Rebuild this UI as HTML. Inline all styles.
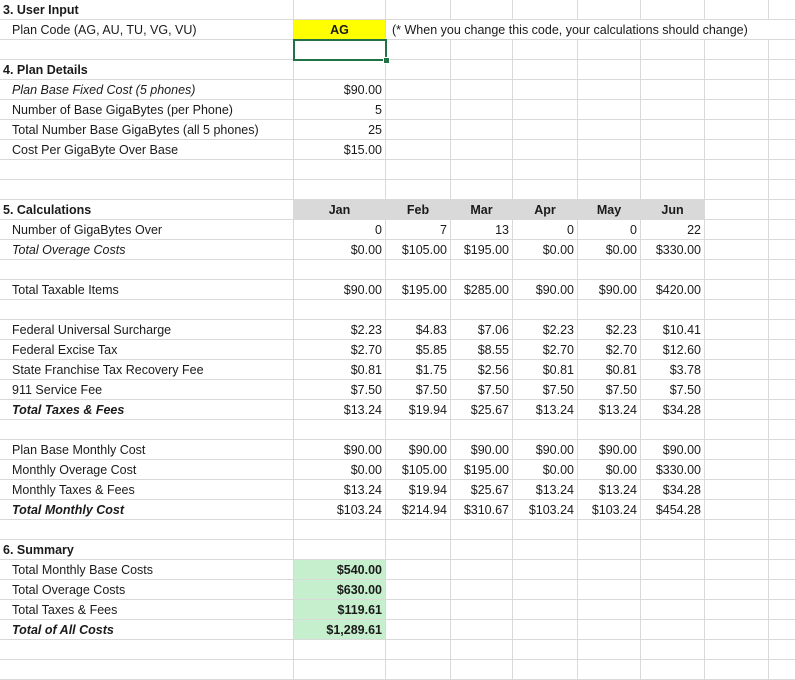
<!DOCTYPE html>
<html><head><meta charset="utf-8"><style>
body{margin:0;background:#fff;width:795px;height:662px;overflow:hidden;font-family:"Liberation Sans",sans-serif;color:#1a1a1a}
table{border-collapse:separate;border-spacing:0;table-layout:fixed;width:834px}
td{box-sizing:border-box;height:20px;border-right:1px solid #d9d9d9;border-bottom:1px solid #d9d9d9;padding:2px 3px 0 3px;font-size:12.5px;white-space:nowrap;overflow:hidden;text-align:right;line-height:17px}
td.l{text-align:left;font-size:12.5px;padding-left:12px}
td.h{text-align:left;font-weight:bold;font-size:12.5px;padding-left:3px}
.i{font-style:italic}.bi{font-style:italic;font-weight:bold}
.c{text-align:center;font-weight:bold}
.g{background:#d9d9d9}
.gr{background:#c6efce;font-weight:bold}
.y{background:#ffff00}
td.ov{text-align:left;overflow:visible;padding-left:6px;font-size:12.5px}
#sel{position:absolute;left:293px;top:39px;width:90px;height:18px;border:2px solid #217346}
#sel:after{content:"";position:absolute;right:-5px;bottom:-5px;width:5px;height:5px;background:#217346;border:1px solid #fff}
</style></head><body>
<table>
<col style="width:294px"><col style="width:92px"><col style="width:65px"><col style="width:62px"><col style="width:65px"><col style="width:63px"><col style="width:64px"><col style="width:64px"><col style="width:64px"><col style="width:61px">
<tr><td class="h">3. User Input</td><td></td><td></td><td></td><td></td><td></td><td></td><td></td><td></td><td></td></tr>
<tr><td class="l">Plan Code (AG, AU, TU, VG, VU)</td><td class="c y">AG</td><td colspan="6" class="ov" style="border-right:none">(* When you change this code, your calculations should change)</td><td></td><td></td></tr>
<tr><td></td><td></td><td></td><td></td><td></td><td></td><td></td><td></td><td></td><td></td></tr>
<tr><td class="h">4. Plan Details</td><td></td><td></td><td></td><td></td><td></td><td></td><td></td><td></td><td></td></tr>
<tr><td class="l i">Plan Base Fixed Cost (5 phones)</td><td>$90.00</td><td></td><td></td><td></td><td></td><td></td><td></td><td></td><td></td></tr>
<tr><td class="l">Number of Base GigaBytes (per Phone)</td><td>5</td><td></td><td></td><td></td><td></td><td></td><td></td><td></td><td></td></tr>
<tr><td class="l">Total Number Base GigaBytes (all 5 phones)</td><td>25</td><td></td><td></td><td></td><td></td><td></td><td></td><td></td><td></td></tr>
<tr><td class="l">Cost Per GigaByte Over Base</td><td>$15.00</td><td></td><td></td><td></td><td></td><td></td><td></td><td></td><td></td></tr>
<tr><td></td><td></td><td></td><td></td><td></td><td></td><td></td><td></td><td></td><td></td></tr>
<tr><td></td><td></td><td></td><td></td><td></td><td></td><td></td><td></td><td></td><td></td></tr>
<tr><td class="h">5. Calculations</td><td class="c g">Jan</td><td class="c g">Feb</td><td class="c g">Mar</td><td class="c g">Apr</td><td class="c g">May</td><td class="c g">Jun</td><td></td><td></td><td></td></tr>
<tr><td class="l">Number of GigaBytes Over</td><td>0</td><td>7</td><td>13</td><td>0</td><td>0</td><td>22</td><td></td><td></td><td></td></tr>
<tr><td class="l i">Total Overage Costs</td><td>$0.00</td><td>$105.00</td><td>$195.00</td><td>$0.00</td><td>$0.00</td><td>$330.00</td><td></td><td></td><td></td></tr>
<tr><td></td><td></td><td></td><td></td><td></td><td></td><td></td><td></td><td></td><td></td></tr>
<tr><td class="l">Total Taxable Items</td><td>$90.00</td><td>$195.00</td><td>$285.00</td><td>$90.00</td><td>$90.00</td><td>$420.00</td><td></td><td></td><td></td></tr>
<tr><td></td><td></td><td></td><td></td><td></td><td></td><td></td><td></td><td></td><td></td></tr>
<tr><td class="l">Federal Universal Surcharge</td><td>$2.23</td><td>$4.83</td><td>$7.06</td><td>$2.23</td><td>$2.23</td><td>$10.41</td><td></td><td></td><td></td></tr>
<tr><td class="l">Federal Excise Tax</td><td>$2.70</td><td>$5.85</td><td>$8.55</td><td>$2.70</td><td>$2.70</td><td>$12.60</td><td></td><td></td><td></td></tr>
<tr><td class="l">State Franchise Tax Recovery Fee</td><td>$0.81</td><td>$1.75</td><td>$2.56</td><td>$0.81</td><td>$0.81</td><td>$3.78</td><td></td><td></td><td></td></tr>
<tr><td class="l">911 Service Fee</td><td>$7.50</td><td>$7.50</td><td>$7.50</td><td>$7.50</td><td>$7.50</td><td>$7.50</td><td></td><td></td><td></td></tr>
<tr><td class="l bi">Total Taxes &amp; Fees</td><td>$13.24</td><td>$19.94</td><td>$25.67</td><td>$13.24</td><td>$13.24</td><td>$34.28</td><td></td><td></td><td></td></tr>
<tr><td></td><td></td><td></td><td></td><td></td><td></td><td></td><td></td><td></td><td></td></tr>
<tr><td class="l">Plan Base Monthly Cost</td><td>$90.00</td><td>$90.00</td><td>$90.00</td><td>$90.00</td><td>$90.00</td><td>$90.00</td><td></td><td></td><td></td></tr>
<tr><td class="l">Monthly Overage Cost</td><td>$0.00</td><td>$105.00</td><td>$195.00</td><td>$0.00</td><td>$0.00</td><td>$330.00</td><td></td><td></td><td></td></tr>
<tr><td class="l">Monthly Taxes &amp; Fees</td><td>$13.24</td><td>$19.94</td><td>$25.67</td><td>$13.24</td><td>$13.24</td><td>$34.28</td><td></td><td></td><td></td></tr>
<tr><td class="l bi">Total Monthly Cost</td><td>$103.24</td><td>$214.94</td><td>$310.67</td><td>$103.24</td><td>$103.24</td><td>$454.28</td><td></td><td></td><td></td></tr>
<tr><td></td><td></td><td></td><td></td><td></td><td></td><td></td><td></td><td></td><td></td></tr>
<tr><td class="h">6. Summary</td><td></td><td></td><td></td><td></td><td></td><td></td><td></td><td></td><td></td></tr>
<tr><td class="l">Total Monthly Base Costs</td><td class="gr">$540.00</td><td></td><td></td><td></td><td></td><td></td><td></td><td></td><td></td></tr>
<tr><td class="l">Total Overage Costs</td><td class="gr">$630.00</td><td></td><td></td><td></td><td></td><td></td><td></td><td></td><td></td></tr>
<tr><td class="l">Total Taxes &amp; Fees</td><td class="gr">$119.61</td><td></td><td></td><td></td><td></td><td></td><td></td><td></td><td></td></tr>
<tr><td class="l bi">Total of All Costs</td><td class="gr">$1,289.61</td><td></td><td></td><td></td><td></td><td></td><td></td><td></td><td></td></tr>
<tr><td></td><td></td><td></td><td></td><td></td><td></td><td></td><td></td><td></td><td></td></tr>
<tr><td></td><td></td><td></td><td></td><td></td><td></td><td></td><td></td><td></td><td></td></tr>
</table>
<div id="sel"></div>
</body></html>
